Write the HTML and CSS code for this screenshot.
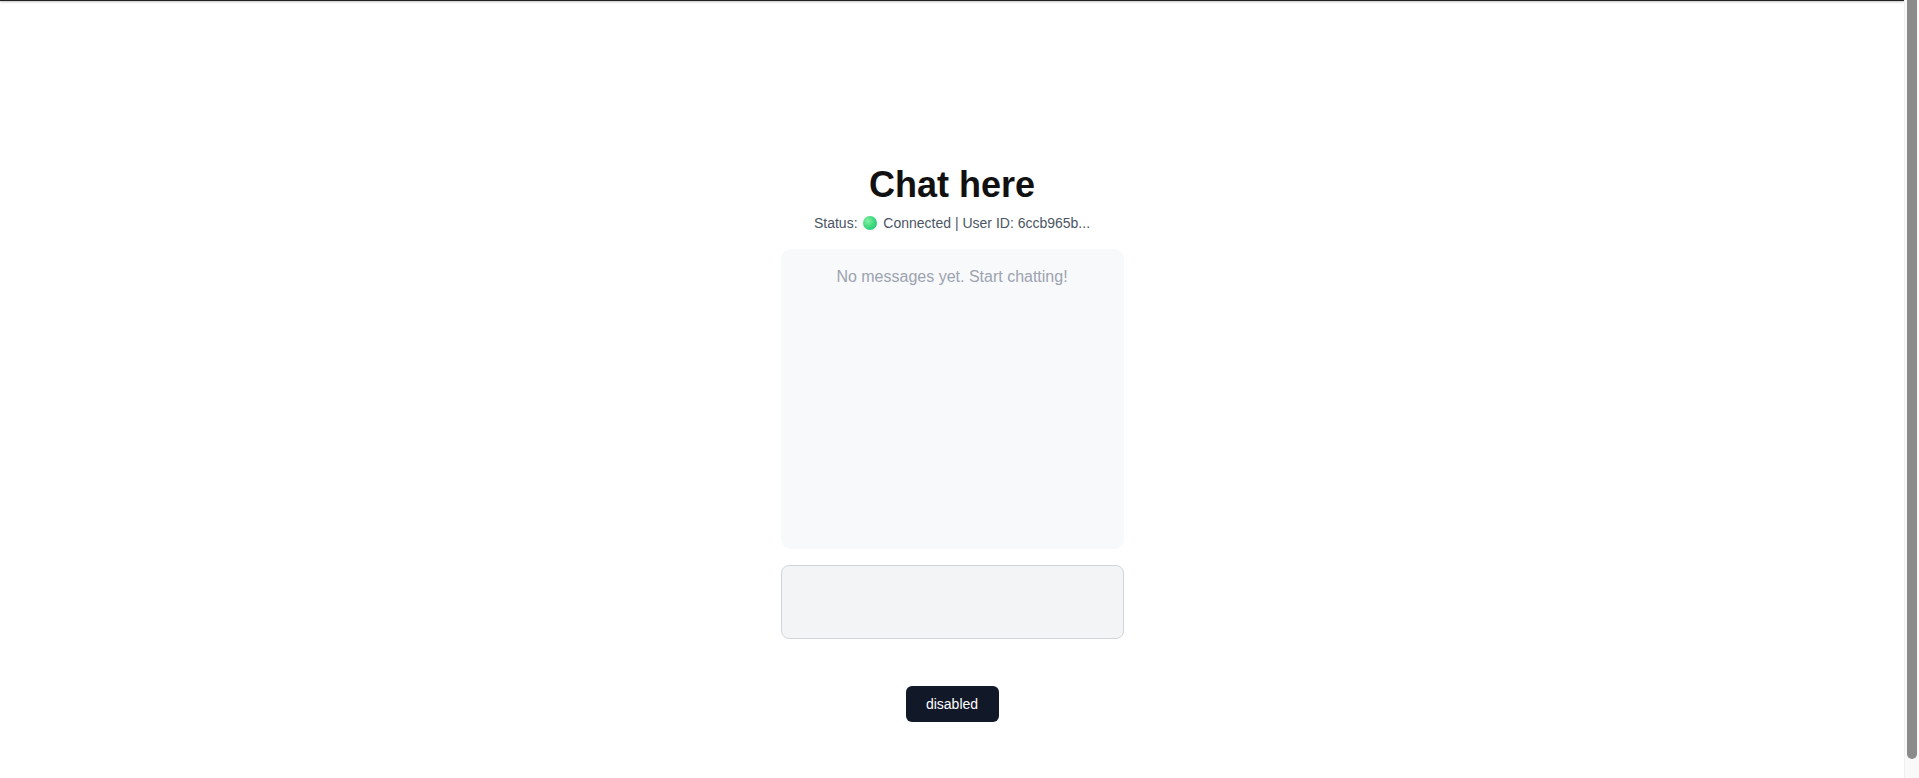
FILE: index.html
```html
<!DOCTYPE html>
<html>

<head>
    <meta name="viewport" content="width=device-width, initial-scale=1">
    <link rel="stylesheet" href="styles.css">
</head>

<body>

    <div class="top-line"></div>

    <!-- page scrollbar, drawn over the right edge -->
    <div class="scroll-track">
        <div class="scroll-thumb"></div>
    </div>

    <main class="page">
        <h1 class="title">Chat here</h1>

        <p class="status">Status: <span class="dot"></span> Connected | User ID: 6ccb965b...</p>

        <div class="messages">
            <p class="empty">No messages yet. Start chatting!</p>
        </div>

        <textarea class="msg-input" disabled></textarea>

        <button class="btn" type="button">disabled</button>
    </main>

</body>

</html>
```

FILE: styles.css
```css
html,
body {
    font-family: "Liberation Sans", Arial, sans-serif;
    background: #fff;
    color: #111827;
}

body {
    margin: 8px 23px 8px 8px;
}

.top-line {
    position: fixed;
    top: 0;
    left: 0;
    right: 15px;
    height: 1px;
    background: #222;
    box-shadow: 0 1px 2px rgba(0, 0, 0, 0.35);
}

.scroll-track {
    position: fixed;
    top: 0;
    right: 0;
    bottom: 0;
    width: 15px;
    background: #f9f9f9;
    border-left: 1px solid #f0f0f0;
    box-sizing: border-box;
}

.scroll-thumb {
    margin: 0 2px 0 2px;
    height: 759px;
    background: #8b8b8b;
    border-radius: 0 0 5px 5px;
}

.page {
    min-height: 100vh;
    display: flex;
    flex-direction: column;
    align-items: center;
    padding-top: 157px;
    box-sizing: border-box;
}

.title {
    margin: 0;
    font-size: 36px;
    line-height: 40px;
    font-weight: 700;
    color: #111;
}

.status {
    margin: 8px 0 0;
    font-size: 14px;
    line-height: 20px;
    color: #4b5563;
}

.dot {
    display: inline-block;
    width: 14px;
    height: 14px;
    margin: 0 2px;
    border-radius: 50%;
    vertical-align: -2px;
    background: radial-gradient(circle at 35% 35%, #86efac, #4ade80 40%, #10b981);
}

.messages {
    width: 343px;
    height: 300px;
    margin-top: 16px;
    padding: 16px;
    box-sizing: border-box;
    background: #f8f9fb;
    border-radius: 10px;
}

.empty {
    margin: 0;
    text-align: center;
    font-size: 16px;
    line-height: 24px;
    color: #9ca3af;
}

.msg-input {
    display: block;
    width: 343px;
    height: 74px;
    margin-top: 16px;
    box-sizing: border-box;
    background: #f3f4f6;
    border: 1px solid #d1d5db;
    border-radius: 8px;
    resize: none;
    font-family: inherit;
}

.btn {
    margin-top: 47px;
    width: 93px;
    height: 36px;
    border: none;
    border-radius: 6px;
    background: #111827;
    color: #fff;
    font-family: inherit;
    font-size: 14px;
    cursor: pointer;
}
```
